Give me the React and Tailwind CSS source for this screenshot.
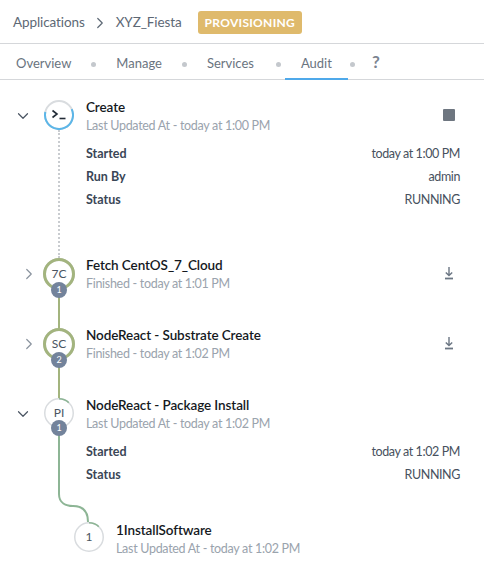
import React from "react";
import { ChevronDown, ChevronRight } from "lucide-react";

const tabs = [
  { name: "Overview", cls: "px-4 pt-[5px] flex items-center" },
  { name: "Manage", cls: "px-4 pt-[5px] flex items-center" },
  { name: "Services", cls: "pl-4 pr-[18px] pt-[5px] flex items-center" },
  { name: "Audit", cls: "px-4 pt-[5px] flex items-center border-b-2 border-[#4fa9ea] -mb-[1px]" },
];

// ring with a coloured arc on top of a thin grey track
const Ring = ({ size = 30, width = 1.5, color, arc, start = 0, track = "#d9dcdf", label, badge, children }) => {
  const r = (size - width) / 2;
  const len = 2 * Math.PI * r;
  return (
    <div className="relative shrink-0 z-10 rounded-full bg-white" style={{ width: size, height: size }}>
      <svg width={size} height={size} className="absolute inset-0 -rotate-90">
        <circle cx={size / 2} cy={size / 2} r={r} fill="none" stroke={track} strokeWidth={width} />
        <circle
          cx={size / 2}
          cy={size / 2}
          r={r}
          fill="none"
          stroke={color}
          strokeWidth={width}
          strokeDasharray={`${len * arc} ${len}`}
          transform={`rotate(${start} ${size / 2} ${size / 2})`}
        />
      </svg>
      <div className="absolute inset-0 flex items-center justify-center text-[12px] text-[#4a5562]">
        {label}
        {children}
      </div>
      {badge && (
        <div className="absolute left-1/2 top-[calc(100%-8px)] -translate-x-1/2 w-4 h-4 rounded-full bg-[#73839b] flex items-center justify-center text-[9px] text-white">
          {badge}
        </div>
      )}
    </div>
  );
};

const Detail = ({ label, value }) => (
  <div className="flex justify-between items-center h-[23px] text-[12.5px]">
    <span className="font-bold text-[#3a4656]">{label}</span>
    <span className="text-[#47515e] tracking-[-0.4px]">{value}</span>
  </div>
);

const Title = ({ children }) => (
  <div className="text-[13.5px] leading-[18px] font-semibold tracking-[-0.1px] text-[#15191e]">{children}</div>
);

const Sub = ({ children }) => (
  <div className="mt-[1px] text-[12.5px] leading-[18px] tracking-[-0.3px] text-[#9aa3ad]">{children}</div>
);

const Step = ({ open, ring, title, sub, action, details, line, height }) => (
  <div className="flex" style={{ height }}>
    <div className="w-[44px] shrink-0 pt-[7px] flex justify-center">
      {open ? (
        <ChevronDown size={18} strokeWidth={1.6} className="text-[#4b5563] ml-[2px]" />
      ) : (
        <ChevronRight size={18} strokeWidth={1.6} className="text-[#8a939e] ml-[13px]" />
      )}
    </div>
    <div className="w-[30px] shrink-0 flex flex-col items-center">
      {ring}
      {line}
    </div>
    <div className="flex-1 pl-3 pr-6 -mt-[2px]">
      <div className="flex justify-between">
        <div>
          <Title>{title}</Title>
          <Sub>{sub}</Sub>
        </div>
        {action}
      </div>
      {details && <div className="mt-[8px]">{details}</div>}
    </div>
  </div>
);

const Green = () => <div className="w-[2px] flex-1 bg-[#a3b47e]" />;

const DownloadBtn = () => (
  <svg width="12" height="14" viewBox="0 0 12 14" fill="none" stroke="#6b7683" className="mt-[10px] mr-[5px]">
    <path d="M6 1v8.5M2.8 6.4 6 9.6l3.2-3.2" strokeWidth="1.4" />
    <path d="M2 12.5h8" strokeWidth="1.8" />
  </svg>
);

export default function App() {
  return (
    <div className="w-[484px] h-[579px] overflow-hidden bg-white font-['Lato','Liberation_Sans',sans-serif]">
      <div className="h-[44px] pt-[2px] border-b border-[#d5d7da] flex items-center pl-[13px] text-[13.5px] tracking-[-0.1px] text-[#5d6875]">
        <span>Applications</span>
        <ChevronRight size={18} strokeWidth={1.6} className="mx-[6px] text-[#5d6875]" />
        <span className="ml-[1px]">XYZ_Fiesta</span>
        <span className="ml-[16px] h-[23px] px-[7px] rounded-[3px] bg-[#dfba6c] text-white text-[12px] font-bold tracking-[0.3px] flex items-center">
          PROVISIONING
        </span>
      </div>

      <div className="h-[36px] border-b border-[#d5d7da] flex items-stretch text-[13px] text-[#6a7480]">
        {tabs.map((t, i) => (
          <React.Fragment key={t.name}>
            <div className={t.cls}>{t.name}</div>
            <div className={i === 3 ? "w-[5px] ml-[2px] pt-[5px] flex items-center" : "w-[5px] mx-[4px] pt-[5px] flex items-center"}>
              <span className="w-[5px] h-[5px] rounded-full bg-[#c4c8cd]" />
            </div>
          </React.Fragment>
        ))}
        <div className="ml-[17px] flex items-center font-bold text-[17px] text-[#7b8490]">?</div>
      </div>

      <div className="pt-[20px]">
        <Step
          open
          height={158}
          title="Create"
          sub="Last Updated At - today at 1:00 PM"
          ring={
            <Ring color="#5cb6e8" arc={0.6} start={65} width={2}>
              <svg width="16" height="12" viewBox="0 0 16 12" fill="none" stroke="#222b36" strokeWidth="1.6">
                <path d="M1.5 1.5 6 5 1.5 8.5" />
                <path d="M8.5 9.5h6" />
              </svg>
            </Ring>
          }
          action={<div className="w-[12px] h-[12px] rounded-[1px] bg-[#6e7680] mt-[11px] mr-[5px]" />}
          details={
            <>
              <Detail label="Started" value="today at 1:00 PM" />
              <Detail label="Run By" value="admin" />
              <Detail label="Status" value="RUNNING" />
            </>
          }
          line={<div className="flex-1 border-l-2 border-dotted border-[#c9ccd0]" />}
        />
        <Step
          height={70}
          title="Fetch CentOS_7_Cloud"
          sub="Finished - today at 1:01 PM"
          ring={<Ring size={32} width={3} color="#a3b47e" arc={1} label="7C" badge="1" />}
          action={<DownloadBtn />}
          line={<Green />}
        />
        <Step
          height={70}
          title="NodeReact - Substrate Create"
          sub="Finished - today at 1:02 PM"
          ring={<Ring size={32} width={3} color="#a3b47e" arc={1} label="SC" badge="2" />}
          action={<DownloadBtn />}
          line={<Green />}
        />
        <Step
          open
          height={124}
          title="NodeReact - Package Install"
          sub="Last Updated At - today at 1:02 PM"
          ring={<Ring color="#8db595" arc={0.12} label="PI" badge="1" />}
          details={
            <>
              <Detail label="Started" value="today at 1:02 PM" />
              <Detail label="Status" value="RUNNING" />
            </>
          }
          line={
            <svg width="2" height="94" className="overflow-visible">
              <path d="M1 0V66C1 75 8 78 15 78C24 78 30 82 30 94" fill="none" stroke="#8db595" strokeWidth="2" />
            </svg>
          }
        />
        <div className="flex pl-[74px]">
          <Ring color="#8db595" arc={0.12} label="1" />
          <div className="pl-3 -mt-[1px]">
            <Title>1InstallSoftware</Title>
            <Sub>Last Updated At - today at 1:02 PM</Sub>
          </div>
        </div>
      </div>
    </div>
  );
}
